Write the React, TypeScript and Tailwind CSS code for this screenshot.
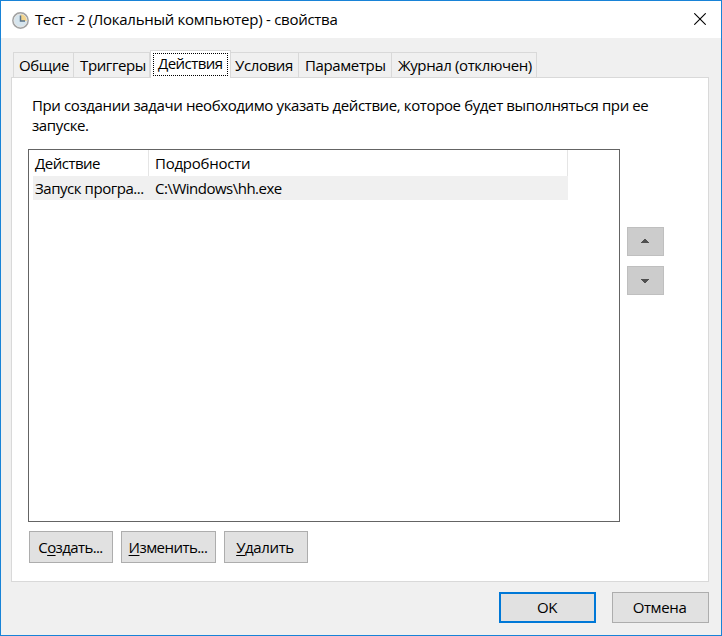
import type { ReactNode } from 'react'
import clsx from 'clsx'

interface TabProps {
  label: string
  className: string
  active?: boolean
}

/** Property sheet tab; the active one is taller and covers the panel's top border. */
function Tab({ label, className, active }: TabProps) {
  return (
    <button
      type="button"
      role="tab"
      aria-selected={!!active}
      className={clsx(
        'flex-none whitespace-nowrap border-[#d9d9d9] text-left',
        active
          ? 'relative z-10 -mb-px h-7 border-x border-t bg-white p-0.5'
          : 'h-[25px] border-r border-t bg-[#f0f0f0]',
        className,
      )}
    >
      {active ? (
        <span className="block h-[23px] w-[75px] border border-dotted border-black pl-1 leading-[19px]">
          {label}
        </span>
      ) : (
        label
      )}
    </button>
  )
}

function Button({ className, children }: { className: string; children: ReactNode }) {
  return (
    <button
      type="button"
      className={clsx('flex flex-none items-center justify-center whitespace-nowrap bg-[#e1e1e1]', className)}
    >
      <span>{children}</span>
    </button>
  )
}

/** Underlined keyboard shortcut letter. */
function Key({ children }: { children: ReactNode }) {
  return <span className="underline decoration-1 underline-offset-2">{children}</span>
}

function ClockIcon() {
  return (
    <svg width="17" height="17" viewBox="0 0 17 17" className="mt-px flex-none">
      <circle cx="8.5" cy="8.5" r="7.6" fill="#d5e3eb" stroke="#a3a3a3" strokeWidth="1.6" />
      <circle cx="8.5" cy="8.5" r="6.4" fill="#d6e5ee" stroke="#e4e4e4" />
      <path d="M8.5 9V2.3a6.2 6.2 0 0 1 6.2 6.7z" fill="#f3d48c" />
      <path d="M8.5 3.5v5.5h4.5" fill="none" stroke="#5a7389" strokeWidth="1.5" />
    </svg>
  )
}

function MoveButton({ label, points, className }: { label: string; points: string; className: string }) {
  return (
    <button
      type="button"
      aria-label={label}
      className="flex h-[29px] w-[37px] items-center justify-center border border-[#bfbfbf] bg-[#cccccc]"
    >
      <svg width="8" height="4" viewBox="0 0 8 4" shapeRendering="crispEdges" className={className}>
        <polygon points={points} fill="#505050" />
      </svg>
    </button>
  )
}

export default function App() {
  return (
    <div className="flex h-[636px] w-[722px] flex-col overflow-hidden border border-[#1883d7] bg-[#f0f0f0] font-['Open_Sans','Noto_Sans',sans-serif] text-[15px] leading-5 tracking-[-0.38px] text-black">
      <header className="flex h-[37px] flex-none items-center bg-white pl-[11px]">
        <ClockIcon />
        <h1 className="mb-0.5 ml-1.5 whitespace-nowrap tracking-[-0.27px]">
          Тест - 2 (Локальный компьютер) - свойства
        </h1>
        <button type="button" aria-label="Закрыть" className="mb-px ml-auto mr-[15px]">
          <svg width="12" height="12" viewBox="0 0 12 12">
            <path d="M0.3 0.3l11.4 11.4M11.7 0.3L0.3 11.7" stroke="#000" strokeWidth="1.1" />
          </svg>
        </button>
      </header>

      <div role="tablist" className="flex h-[39px] flex-none items-end pl-3">
        <Tab label="Общие" className="w-[61px] border-l pl-[5px]" />
        <Tab label="Триггеры" className="w-[76px] pl-1.5" />
        <Tab label="Действия" className="w-[81px] tracking-[-0.55px]" active />
        <Tab label="Условия" className="w-[68px] pl-1" />
        <Tab label="Параметры" className="w-[93px] pl-1.5" />
        <Tab label="Журнал (отключен)" className="w-[145px] pl-1.5" />
      </div>

      <main className="ml-2.5 h-[505px] w-[698px] flex-none border border-[#d9d9d9] bg-white pl-4">
        <p className="ml-1 h-[71px] whitespace-nowrap pt-[17px]">
          При создании задачи необходимо указать действие, которое будет выполняться при ее
          <br />
          запуске.
        </p>
        <div className="flex">
          <div className="h-[373px] w-[592px] border border-[#646464]">
            <div className="flex h-[26px] leading-[26px]">
              <div className="w-[120px] border-r border-[#e5e5e5] pl-1.5 tracking-[-0.5px]">Действие</div>
              <div className="w-[419px] border-r border-[#e5e5e5] pl-1.5 tracking-[-0.25px]">Подробности</div>
            </div>
            <div className="ml-1 flex h-6 w-[535px] bg-[#f0f0f0] leading-6">
              <div className="w-[116px] whitespace-nowrap pl-0.5 tracking-[-0.45px]">Запуск програ...</div>
              <div className="pl-1.5 tracking-[-0.5px]">C:\Windows\hh.exe</div>
            </div>
          </div>
          <div className="ml-[7px] flex flex-col gap-2.5 pt-[78px]">
            <MoveButton label="Вверх" points="0,4 3,0 5,0 8,4" className="mb-px mr-px" />
            <MoveButton label="Вниз" points="0,0 8,0 5,4 3,4" className="mr-px mt-px" />
          </div>
        </div>
        <div className="ml-px mt-[9px] flex gap-2">
          <Button className="h-8 w-[84px] border border-[#adadad] pb-px pr-px tracking-[-0.6px]">
            С<Key>о</Key>здать...
          </Button>
          <Button className="h-8 w-[95px] border border-[#adadad] pb-px pr-px tracking-[-0.55px]">
            <Key>И</Key>зменить...
          </Button>
          <Button className="h-8 w-[84px] border border-[#adadad] pb-px pr-0.5">
            <Key>У</Key>далить
          </Button>
        </div>
      </main>

      <footer className="flex justify-end gap-4 pr-3 pt-2.5">
        <Button className="h-[31px] w-[97px] border-2 border-[#0078d7] pb-px pr-px">OK</Button>
        <Button className="h-[31px] w-[97px] border border-[#adadad] pb-px pr-0.5">Отмена</Button>
      </footer>
    </div>
  )
}
